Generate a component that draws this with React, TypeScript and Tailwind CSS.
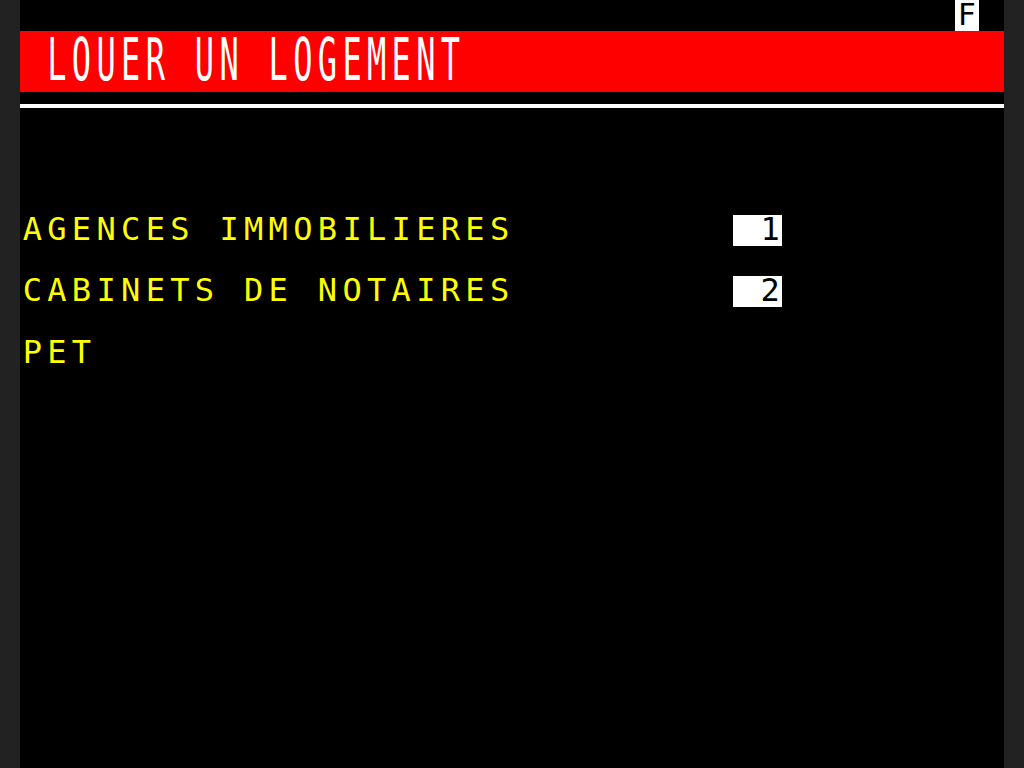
import React from "react";

const font = { fontFamily: '"DejaVu Sans Mono", "Liberation Mono", monospace' };

function Cells({ text, className = "" }: { text: string; className?: string }) {
  return (
    <div className={"flex " + className}>
      {text.split("").map((c, i) => (
        <span key={i} className="w-[24.6px] shrink-0 text-center whitespace-pre">
          {c}
        </span>
      ))}
    </div>
  );
}

export default function App() {
  return (
    <div className="flex h-[768px] w-full bg-[#222222] px-[20px]" style={font}>
      <div className="grid h-[768px] w-[984px] grid-cols-[repeat(40,24.6px)] grid-rows-[repeat(25,30.72px)] bg-black text-[32px] leading-[30.72px]">
        {/* status F */}
        <div className="col-[39/40] row-[1/2] flex items-center justify-center bg-white text-[30px] leading-[30px] text-black">
          <span>F</span>
        </div>

        {/* title band */}
        <div className="col-[1/41] row-[2/4] flex items-center bg-[#ff0000] text-white">
          <div className="flex h-[61.44px] items-center leading-[61.44px] origin-center scale-y-[1.82]">
            <span className="w-[24.6px] shrink-0" />
            <Cells text="LOUER UN LOGEMENT" className="font-light" />
          </div>
        </div>

        {/* separator */}
        <div className="col-[1/41] row-[4/5] flex flex-col">
          <div className="h-[11.8px]" />
          <div className="h-[4px] bg-white" />
        </div>

        {/* menu lines */}
        <div className="col-[1/22] row-[8/9] text-[#ffff00]">
          <Cells text="AGENCES IMMOBILIERES" className="-translate-y-[1px]" />
        </div>
        <div className="col-[30/32] row-[8/9] bg-white text-black">
          <Cells text=" 1" className="-translate-y-[1px]" />
        </div>

        <div className="col-[1/22] row-[10/11] text-[#ffff00]">
          <Cells text="CABINETS DE NOTAIRES" className="-translate-y-[1px]" />
        </div>
        <div className="col-[30/32] row-[10/11] bg-white text-black">
          <Cells text=" 2" className="-translate-y-[1px]" />
        </div>

        <div className="col-[1/10] row-[12/13] text-[#ffff00]">
          <Cells text="PET" className="-translate-y-[1px]" />
        </div>
      </div>
    </div>
  );
}
